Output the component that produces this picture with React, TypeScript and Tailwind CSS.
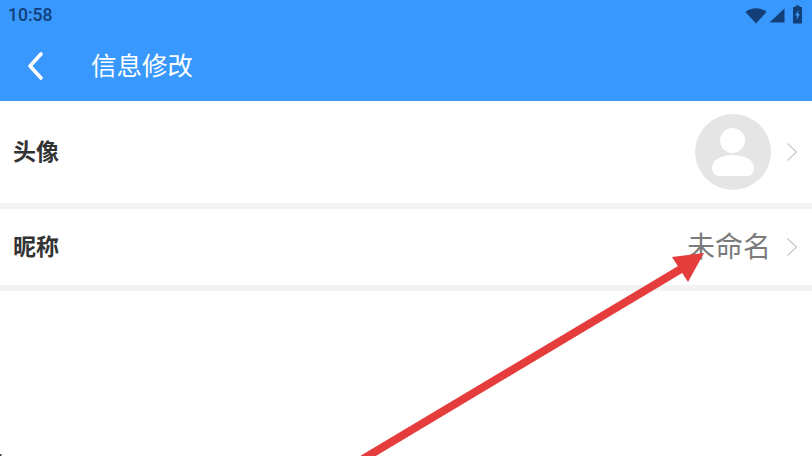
const FONT = 'font-["Roboto","Noto_Sans_CJK_SC",sans-serif]';

const Chevron = () => (
  <svg width="12" height="20" viewBox="0 0 12 20" fill="none" className="shrink-0">
    <path d="M1.5 1.5 L10.5 10 L1.5 18.5" stroke="#c6c6c6" strokeWidth="1.1" />
  </svg>
);

const StatusIcons = () => (
  <div className="flex items-center">
    <svg width="22" height="16" viewBox="0 0 22 16">
      <path d="M0.5 4 C6.5 -1 15.5 -1 21.5 4 L11 15.5 Z" fill="#123f78" />
    </svg>
    <svg width="16" height="15" viewBox="0 0 16 15" className="ml-[2px]">
      <path d="M0.5 14.5 L15.5 0.5 V14.5 Z" fill="#123f78" />
    </svg>
    <svg width="11" height="19" viewBox="0 0 11 19" className="ml-[7px] mb-[3px]">
      <path d="M3.5 0.5 H7.5 V2 H10 V18.5 H1 V2 H3.5 Z" fill="#123f78" />
      <path d="M6.5 5 L3.2 10.5 H5.2 L4.5 15 L7.9 9 H5.9 Z" fill="#3898fd" />
    </svg>
  </div>
);

const Avatar = () => (
  <div className="w-[76px] h-[76px] rounded-full bg-[#e5e5e5] flex items-center justify-center">
    <svg width="44" height="50" viewBox="0 0 44 50">
      <circle cx="21.5" cy="13.5" r="12.5" fill="#fff" />
      <path d="M1 41 C1 33 10 28 22 28 C34 28 43 33 43 41 C43 46 40 49 36 49 H8 C4 49 1 46 1 41 Z" fill="#fff" />
    </svg>
  </div>
);

const Arrow = () => (
  <svg width="812" height="456" viewBox="0 0 812 456" className="absolute inset-0 pointer-events-none">
    <path d="M363 459 L686 266" stroke="#e53c3c" strokeWidth="8" fill="none" />
    <path d="M704 253 L672 257 L688 282 Z" fill="#e53c3c" />
    <path d="M0 454 H1.5 V456 H0 Z" fill="#444444" />
  </svg>
);

export default function App() {
  return (
    <div className={`relative w-[812px] h-[456px] overflow-hidden bg-white ${FONT}`}>
      <header className="bg-[#3898fd] h-[101px] flex flex-col">
        <div className="h-[31px] flex items-center justify-between pl-2 pr-[9px]">
          <span className="text-[17.5px] font-medium text-[#123f78] leading-none">10:58</span>
          <StatusIcons />
        </div>
        <div className="flex items-center h-[70px] pb-[1px]">
          <svg width="20" height="30" viewBox="0 0 20 30" className="ml-[25px]">
            <path d="M16 3 L5 15 L16 27" stroke="#fff" strokeWidth="3.6" strokeLinecap="round" strokeLinejoin="round" fill="none" />
          </svg>
          <span className="ml-[46px] pt-[2px] text-[25.5px] text-white leading-none font-normal">信息修改</span>
        </div>
      </header>

      <div className="h-[102px] flex items-center justify-between pl-[13px] pr-[14px]">
        <span className="text-[23px] font-semibold text-[#333333] leading-none">头像</span>
        <div className="flex items-center gap-[15px]">
          <Avatar />
          <Chevron />
        </div>
      </div>
      <div className="h-[6px] bg-[#f3f3f3]" />

      <div className="h-[76px] flex items-center justify-between pl-[13px] pr-[14px]">
        <span className="text-[23px] font-semibold text-[#333333] leading-none">昵称</span>
        <div className="flex items-center gap-[15px]">
          <span className="pt-[2px] text-[28px] text-[#7b7b7b] leading-none">未命名</span>
          <Chevron />
        </div>
      </div>
      <div className="h-[6px] bg-[#f3f3f3]" />

      <Arrow />
    </div>
  );
}
